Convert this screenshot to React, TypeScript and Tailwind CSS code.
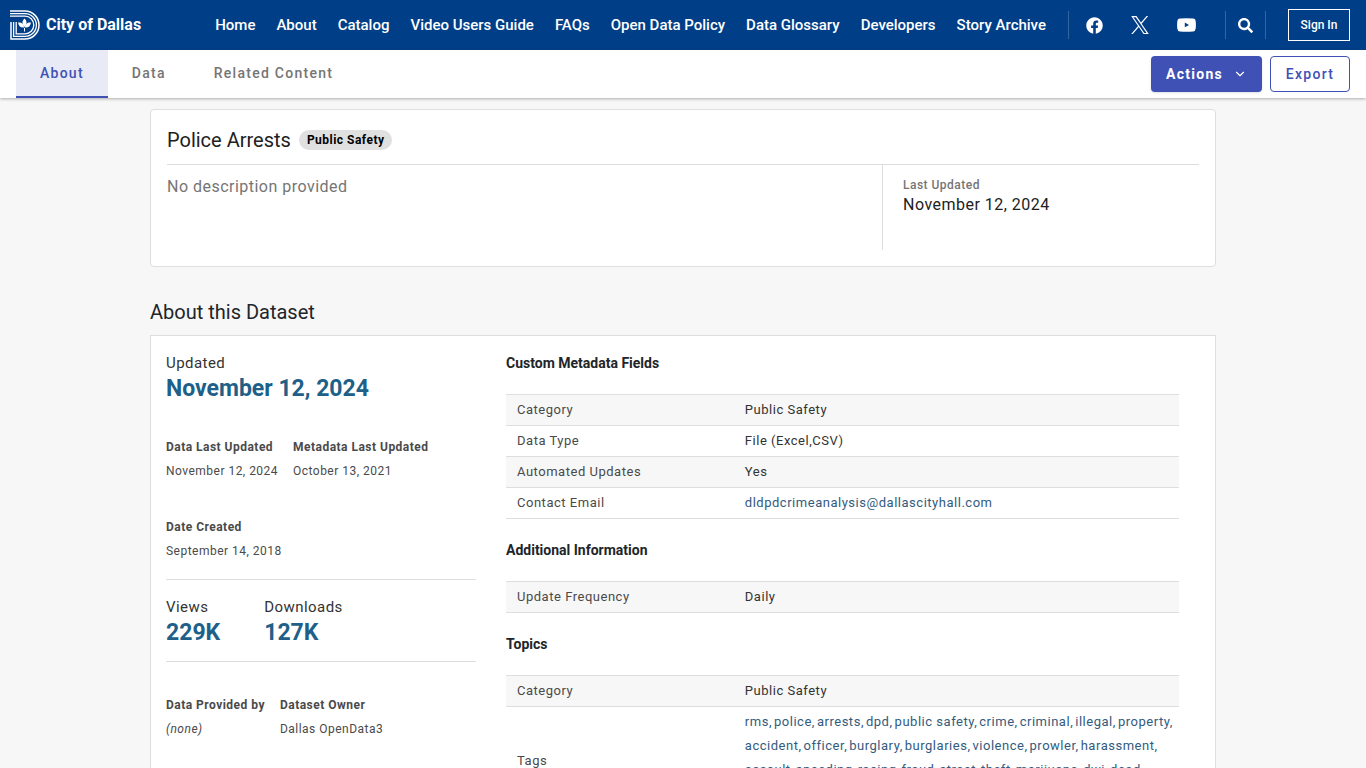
import type { ReactNode } from 'react';
import { ChevronDown } from 'lucide-react';
import { FaFacebook, FaSearch } from 'react-icons/fa';

const navLinks = [
  'Home',
  'About',
  'Catalog',
  'Video Users Guide',
  'FAQs',
  'Open Data Policy',
  'Data Glossary',
  'Developers',
  'Story Archive',
];

const tags = [
  'rms', 'police', 'arrests', 'dpd', 'public safety', 'crime', 'criminal', 'illegal', 'property',
  'accident', 'officer', 'burglary', 'burglaries', 'violence', 'prowler', 'harassment',
  'assault', 'speeding', 'racing', 'fraud', 'street', 'theft', 'marijuana', 'dwi', 'dead',
  'homicide', 'robbery', 'drugs', 'vehicle',
];

function Logo() {
  return (
    <svg viewBox="0 0 30 30" className="w-[30px] h-[30px]" fill="none" stroke="white" aria-hidden="true">
      <path strokeWidth="1.5" d="M0 1H15A14 14 0 0 1 15 29H1V12" />
      <path strokeWidth="1.3" d="M0 3.6H15A11.4 11.4 0 0 1 15 26.4H3.6V12" />
      <path strokeWidth="1.3" d="M0 6.2H15A8.800 8.800 0 0 1 15 23.800H6.200V12" />
      <g fill="white" stroke="none">
        <path d="M14.500 8.500C17.200 11 17.200 14 14.500 17C11.800 14 11.800 11 14.500 8.500Z" />
        <path d="M8 12.500C11.500 12 13.500 13.500 14.200 17.500C10.500 18 8.500 16 8 12.500Z" />
        <path d="M21 12.500C17.500 12 15.500 13.500 14.800 17.500C18.500 18 20.500 16 21 12.500Z" />
        <path d="M14 18H15V21.500H14Z" />
      </g>
    </svg>
  );
}

function XLogo() {
  return (
    <svg viewBox="0 0 24 24" className="w-[18px] h-[18px]" fill="white" aria-hidden="true">
      <path d="M14.2 10.2 22.900 0h-2.100l-7.500 8.800L7.300 0H.3l9.100 13.300L.3 24h2.100l8-9.300L16.700 24h7L14.200 10.200zM11.400 13.500l-.9-1.300L3.100 1.600h3.200l5.900 8.500.9 1.300 7.700 11.100h-3.100l-6.300-9z" />
    </svg>
  );
}

function YouTubeLogo() {
  return (
    <svg viewBox="0 0 19 14" className="w-[19px] h-[14px]" fill="white" aria-hidden="true">
      <path
        fillRule="evenodd"
        d="M3 .5Q9.500 0 16 .5Q18.500 .7 18.700 3.500Q19.100 7 18.700 10.500Q18.500 13.300 16 13.500Q9.500 14 3 13.500Q.5 13.300 .3 10.500Q-.1 7 .3 3.500Q.5 .7 3 .5ZM7.800 4.600V9.200L12 6.900Z"
      />
    </svg>
  );
}

function Detail({ label, children }: { label: string; children: ReactNode }) {
  return (
    <div className="text-xs leading-6 tracking-[0.04em] text-[#4a4a4a]">
      <dt className="font-bold">{label}</dt>
      <dd>{children}</dd>
    </div>
  );
}

function Stat({ label, value }: { label: string; value: string }) {
  return (
    <div>
      <p className="text-[15px] leading-6 tracking-[0.03em] text-[#333]">{label}</p>
      <p className="text-[23px] leading-7 font-bold text-[#205f88]">{value}</p>
    </div>
  );
}

function MetaTable({ title, rows }: { title: string; rows: [string, ReactNode][] }) {
  return (
    <section className="mb-[19px]">
      <h3 className="text-sm leading-6 font-bold text-[#212529] mb-[19px]">{title}</h3>
      <table className="w-full table-fixed border-collapse text-[13px] leading-6 tracking-[0.04em]">
        <tbody>
          {rows.map(([label, value]) => (
            <tr key={label} className="border-y border-[#dedede] odd:bg-[#f7f7f7]">
              <th scope="row" className="w-[34%] pl-[11px] py-[3px] text-left font-normal text-[#4a4a4a]">
                {label}
              </th>
              <td className="pl-2.5 py-[3px] text-[#333]">{value}</td>
            </tr>
          ))}
        </tbody>
      </table>
    </section>
  );
}

export default function App() {
  return (
    <div className="min-h-screen bg-[#f7f7f7] font-['Roboto',sans-serif]">
      <header className="h-[50px] bg-[#003e87] text-white flex items-center justify-between pl-2.5 pr-4">
        <a href="#" className="flex items-center gap-1.5 text-base font-bold">
          <Logo />
          City of Dallas
        </a>
        <div className="flex items-center">
          <nav className="flex gap-[21px] text-[15px] font-medium whitespace-nowrap">
            {navLinks.map((link) => (
              <a key={link} href="#">
                {link}
              </a>
            ))}
          </nav>
          <div className="flex items-center gap-7 h-7 ml-[22px] pl-[17px] pr-[29px] border-x border-[#33659f]">
            <a href="#" aria-label="Facebook">
              <FaFacebook size={17} />
            </a>
            <a href="#" aria-label="X">
              <XLogo />
            </a>
            <a href="#" aria-label="YouTube">
              <YouTubeLogo />
            </a>
          </div>
          <button aria-label="Search" className="h-7 px-3 border-r border-[#33659f]">
            <FaSearch size={15} />
          </button>
          <a
            href="#"
            className="ml-[22px] h-8 w-[62px] border border-white text-xs font-medium flex items-center justify-center"
          >
            Sign In
          </a>
        </div>
      </header>

      <div className="relative h-12 bg-white shadow-[0_1px_3px_rgba(0,0,0,0.3)] flex items-center justify-between px-4">
        <nav className="flex self-stretch text-sm leading-[46px] font-medium tracking-[0.09em] text-[#757575]">
          <a href="#" className="px-6 bg-[#e8eaf6] text-[#3f51b5] border-b-2 border-[#3f51b5]">
            About
          </a>
          <a href="#" className="px-6">
            Data
          </a>
          <a href="#" className="px-6">
            Related Content
          </a>
        </nav>
        <div className="flex gap-2 text-sm tracking-[0.09em]">
          <button className="h-9 w-[111px] rounded bg-[#3f51b5] text-white font-bold shadow flex items-center justify-center gap-2.5">
            Actions
            <ChevronDown size={14} />
          </button>
          <button className="h-9 w-20 rounded border border-[#3f51b5] text-[#3f51b5] font-medium">
            Export
          </button>
        </div>
      </div>

      <main className="w-full max-w-[1066px] mx-auto pt-[11px]">
        <section className="bg-white border border-[#dedede] rounded px-4 pt-4 pb-4">
          <div className="flex items-center gap-2 pb-2.5 border-b border-[#dedede]">
            <h1 className="text-xl leading-7 text-[#212121]">Police Arrests</h1>
            <span className="h-5 px-2 rounded-full bg-[#e0e0e0] text-xs leading-5 font-bold tracking-[0.04em] text-black">
              Public Safety
            </span>
          </div>
          <div className="flex h-[85px]">
            <p className="flex-1 pt-2.5 text-base tracking-[0.03em] text-[#757575]">
              No description provided
            </p>
            <div className="w-[317px] pl-5 pt-2.5 border-l border-[#dedede]">
              <p className="text-xs leading-5 font-medium tracking-[0.04em] text-[#757575]">Last Updated</p>
              <p className="text-base leading-5 tracking-[0.03em] text-[#212121]">November 12, 2024</p>
            </div>
          </div>
        </section>

        <h2 className="mt-[31px] mb-[9px] text-xl leading-7 text-[#212529]">About this Dataset</h2>
        <section className="bg-white border border-[#dedede] flex gap-[30px] pl-[15px] pr-9 pt-[15px]">
          <div className="w-[310px] shrink-0">
            <Stat label="Updated" value="November 12, 2024" />
            <dl className="mt-8 pb-4 flex flex-wrap gap-x-[15px] gap-y-8 border-b border-[#dedede]">
              <Detail label="Data Last Updated">November 12, 2024</Detail>
              <Detail label="Metadata Last Updated">October 13, 2021</Detail>
              <Detail label="Date Created">September 14, 2018</Detail>
            </dl>
            <div className="flex gap-11 pt-[15px] pb-3.5 border-b border-[#dedede]">
              <Stat label="Views" value="229K" />
              <Stat label="Downloads" value="127K" />
            </div>
            <dl className="mt-[31px] pb-4 flex flex-wrap gap-x-[15px]">
              <Detail label="Data Provided by">
                <em>(none)</em>
              </Detail>
              <Detail label="Dataset Owner">Dallas OpenData3</Detail>
            </dl>
          </div>
          <div className="flex-1 min-w-0">
            <MetaTable
              title="Custom Metadata Fields"
              rows={[
                ['Category', 'Public Safety'],
                ['Data Type', 'File (Excel,CSV)'],
                ['Automated Updates', 'Yes'],
                [
                  'Contact Email',
                  <a href="mailto:dldpdcrimeanalysis@dallascityhall.com" className="text-[#335b7e]">
                    dldpdcrimeanalysis@dallascityhall.com
                  </a>,
                ],
              ]}
            />
            <MetaTable title="Additional Information" rows={[['Update Frequency', 'Daily']]} />
            <MetaTable
              title="Topics"
              rows={[
                ['Category', 'Public Safety'],
                [
                  'Tags',
                  <div className="flex flex-wrap gap-x-0.5 pb-1.5 text-[#335b7e]">
                    {tags.map((tag) => (
                      <a key={tag} href="#">
                        {tag},
                      </a>
                    ))}
                  </div>,
                ],
              ]}
            />
          </div>
        </section>
      </main>
    </div>
  );
}
